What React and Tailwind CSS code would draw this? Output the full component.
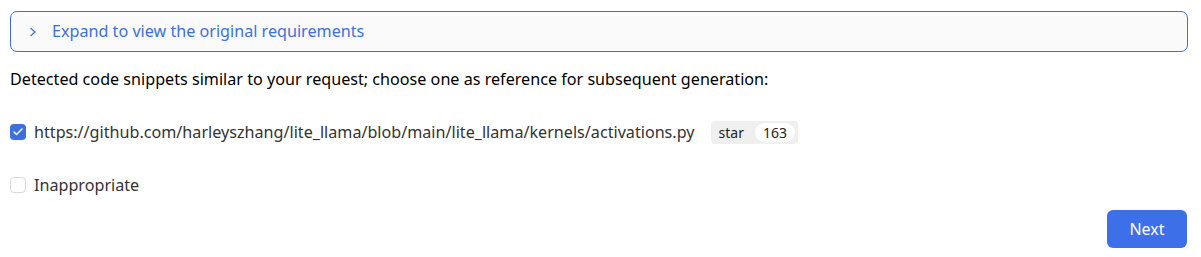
import { Check } from 'lucide-react';

export default function App() {
  return (
    <div className="w-[1201px] h-[257px] bg-white px-[10px] pt-[11px] text-[16.15px] font-['Noto_Sans',sans-serif]">
      <div className="h-[41px] w-[1178px] rounded-[7px] border border-[#3d6fe0] bg-[#fafafa] flex items-center pl-[18px] text-[#3d6fe0]">
        <svg width="8" height="10" viewBox="0 0 8 10" fill="none" stroke="currentColor" strokeWidth="1.3" className="mr-[15px]">
          <path d="M1.5 1 L6 5 L1.5 9" />
        </svg>
        <span>Expand to view the original requirements</span>
      </div>

      <p className="mt-[16px] text-black leading-[22px]">
        Detected code snippets similar to your request; choose one as reference for subsequent generation:
      </p>

      <label className="mt-[30px] flex items-center h-[24px]">
        <span className="w-[16px] h-[16px] rounded-[4px] bg-[#3d6fe0] flex items-center justify-center">
          <Check size={12} strokeWidth={3} className="text-white" />
        </span>
        <span className="ml-[8px] text-[#333]">https://github.com/harleyszhang/lite_llama/blob/main/lite_llama/kernels/activations.py</span>
        <span className="ml-[16px] flex items-center h-[23px] rounded-[4px] bg-[#efefef] pl-[8px] pr-[3px] text-[14px] text-[#222]">
          star
          <span className="ml-[11px] bg-white rounded-full px-[8px] h-[19px] leading-[19px]">163</span>
        </span>
      </label>

      <label className="mt-[29px] flex items-center h-[24px]">
        <span className="w-[16px] h-[16px] rounded-[4px] border border-[#d9d9d9] bg-white" />
        <span className="ml-[8px] text-[#333]">Inappropriate</span>
      </label>

      <div className="flex justify-end pr-[4px] mt-[13px]">
        <button className="w-[80px] h-[38px] rounded-[6px] bg-[#3d6fe8] text-white text-[16px]">Next</button>
      </div>
    </div>
  );
}
